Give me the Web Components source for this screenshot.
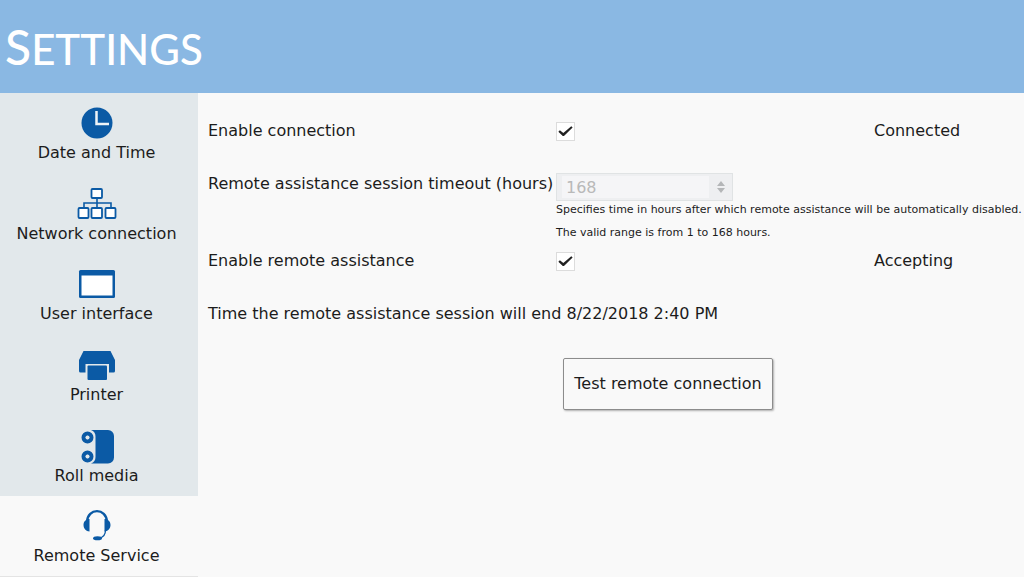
<!DOCTYPE html>
<html lang="en">
<head>
<meta charset="utf-8">
<meta name="viewport" content="width=device-width, initial-scale=1">
<title>Settings</title>
<style>
  html, body { margin: 0; }
  body {
    font: 16px/20px "DejaVu Sans", Verdana, sans-serif;
    color: #1c1c1c;
    background: #f9f9f9;
    --accent: #0b5aa5;
    --bar: #8ab8e3;
    --side: #e2e8eb;
    --page: #f9f9f9;
  }
</style>
</head>
<body>
<settings-page>
  <span slot="title">SETTINGS</span>
  <nav-item slot="nav" icon="clock">Date and Time</nav-item>
  <nav-item slot="nav" icon="network">Network connection</nav-item>
  <nav-item slot="nav" icon="window">User interface</nav-item>
  <nav-item slot="nav" icon="printer">Printer</nav-item>
  <nav-item slot="nav" icon="roll">Roll media</nav-item>
  <nav-item slot="nav" icon="headset" current>Remote Service</nav-item>

  <check-row label="Enable connection" status="Connected"></check-row>
  <timeout-row label="Remote assistance session timeout (hours)" value="168" min="1" max="168">
    <span slot="hint">Specifies time in hours after which remote assistance will be automatically disabled.</span>
    <span slot="range">The valid range is from 1 to 168 hours.</span>
  </timeout-row>
  <check-row label="Enable remote assistance" status="Accepting"></check-row>
  <info-row>Time the remote assistance session will end 8/22/2018 2:40 PM</info-row>
  <action-row>Test remote connection</action-row>
</settings-page>

<script>
const ROW = `
  :host { display: block; }
  .row { display: grid; grid-template-columns: 348fr 318fr 150fr; align-items: center; }
  label { white-space: nowrap; }
`;

class BaseElement extends HTMLElement {
  constructor() {
    super();
    this.attachShadow({ mode: "open" });
  }
  connectedCallback() {
    this.shadowRoot.innerHTML = this.render();
  }
  attr(name) {
    return this.getAttribute(name) || "";
  }
}

customElements.define("settings-page", class extends BaseElement {
  render() {
    return `
      <style>
        :host { display: flex; flex-direction: column; min-height: 100vh; }
        header { background: var(--bar); color: #fff; padding: 19px 5px 16px; }
        h1 { margin: 0; font: 500 42px/56px Lato, Carlito, sans-serif; }
        h1::first-letter { font-size: 48px; }
        .body { flex: 1; display: flex; }
        nav { flex: 0 0 198px; background: var(--side); display: grid; grid-auto-rows: 1fr; }
        main { flex: 1; min-width: 0; padding: 25px 0 24px 10px; display: flex; flex-direction: column; gap: 8px; }
      </style>
      <header><h1><slot name="title"></slot></h1></header>
      <div class="body">
        <nav aria-label="Settings sections"><slot name="nav"></slot></nav>
        <main><slot></slot></main>
      </div>`;
  }
});

const ICONS = {
  clock: `<circle cx="20" cy="16" r="15.5" fill="#0b5aa5"/><path d="M19.500 4v13H32" fill="none" stroke="#eef3f7" stroke-width="2.500"/>`,
  network: `
    <path d="M20 10v12M7 20v-5h27v5" fill="none" stroke="#0b5aa5" stroke-width="1.600"/>
    <g fill="#fff" stroke="#0b5aa5" stroke-width="1.800">
      <rect x="14.500" y="1" width="10.500" height="9" rx="1"/>
      <rect x="1.500" y="20" width="10" height="10" rx="1"/>
      <rect x="14.500" y="20" width="10.500" height="10" rx="1"/>
      <rect x="28.500" y="20" width="10" height="10" rx="1"/>
    </g>`,
  window: `<rect x="2" y="2" width="36" height="28" rx="1.500" fill="#0b5aa5"/><rect x="4.500" y="7.500" width="31" height="20" fill="#fff"/>`,
  printer: `<path d="M6.500 2h27l4.500 9v11a1.500 1.500 0 0 1-1.500 1.500H32V15H8.500v8.500H3.500A1.500 1.500 0 0 1 2 22V11z" fill="#0b5aa5"/><rect x="10.500" y="16.500" width="19.500" height="14.500" rx="1" fill="#0b5aa5"/>`,
  roll: `
    <path d="M14 0h17a6 6 0 0 1 6 6v21.500a6 6 0 0 1-6 6H14c3-1 4.500-3.500 4.500-6.500V6.500C18.500 3.500 17 1 14 0z" fill="#0b5aa5"/>
    <g fill="none" stroke="#0b5aa5" stroke-width="4"><circle cx="10.500" cy="7.500" r="4"/><circle cx="10.500" cy="26.500" r="4"/></g>
    <g fill="#e2e8eb"><circle cx="10.500" cy="7.500" r="1.800"/><circle cx="10.500" cy="26.500" r="1.800"/></g>`,
  headset: `
    <path d="M10 12C10.500-2.500 29.500-2.500 30 12" fill="none" stroke="#0b5aa5" stroke-width="2.400"/>
    <path d="M12.500 9v12.500c-3.500 0-6-3-6-6.500s2.500-6 6-6zM27.500 9v12.500c3.500 0 6-3 6-6.500s-2.500-6-6-6z" fill="#0b5aa5"/>
    <path d="M28.500 20c0 5-2 7.500-6.500 8" fill="none" stroke="#0b5aa5" stroke-width="1.300"/>
    <ellipse cx="20.500" cy="28.200" rx="4.500" ry="2" fill="#0b5aa5"/>`
};

customElements.define("nav-item", class extends BaseElement {
  render() {
    const current = this.hasAttribute("current");
    return `
      <style>
        :host { display: block; }
        :host([current]) { background: var(--page); border-bottom: 1px solid #e4e4e4; }
        a { display: flex; flex-direction: column; align-items: center; gap: 3px; padding-top: 14px; padding-right: 5px; color: inherit; text-decoration: none; white-space: nowrap; }
        svg { display: block; overflow: visible; }
      </style>
      <a href="#${this.attr("icon")}"${current ? ' aria-current="page"' : ""}>
        <svg width="40" height="33" viewBox="0 0 40 33" aria-hidden="true">${ICONS[this.attr("icon")]}</svg>
        <span><slot></slot></span>
      </a>`;
  }
});

customElements.define("check-row", class extends BaseElement {
  render() {
    return `
      <style>
        ${ROW}
        :host { margin-bottom: 19px; }
        .row { min-height: 26px; }
        input { appearance: none; display: block; box-sizing: border-box; width: 19px; height: 19px; margin: 0; border: 1px solid #dcdcdc; background: #fff; }
        input:checked::before { content: ""; display: block; width: 17px; height: 17px; background: #222;
          clip-path: polygon(8% 55%, 17% 46%, 37% 62%, 84% 22%, 92% 30%, 41% 79%, 34% 79%); }
      </style>
      <div class="row">
        <label for="box">${this.attr("label")}</label>
        <input id="box" type="checkbox" checked>
        <span>${this.attr("status")}</span>
      </div>`;
  }
});

customElements.define("timeout-row", class extends BaseElement {
  render() {
    return `
      <style>
        ${ROW}
        .row { grid-template-columns: 348fr 468fr; align-items: start; }
        label { padding-top: 3px; }
        .field { display: flex; align-items: center; box-sizing: border-box; width: 177px; height: 28px; margin-top: 2px; padding: 2px 7px 2px 5px; border: 1px solid #e0e3e4; background: #eeeff1; }
        input { appearance: textfield; flex: 1; min-width: 0; height: 22px; box-sizing: border-box; margin: 0 8px 0 0; padding: 0 4px; border: 0; background: #f5f5f7; color: #b9b9b9; font: inherit; }
        input::-webkit-inner-spin-button { appearance: none; }
        .hints { grid-column: 2; display: grid; gap: 8px; padding-top: 1px; font-size: 11px; line-height: 15px; white-space: nowrap; }
      </style>
      <div class="row">
        <label for="hours">${this.attr("label")}</label>
        <div class="field">
          <input id="hours" type="number" value="${this.attr("value")}" min="${this.attr("min")}" max="${this.attr("max")}" disabled>
          <svg width="8" height="12" viewBox="0 0 8 12" aria-hidden="true" fill="#b4b6b8"><path d="M4 0l4 5H0zM4 12l4-5H0z"/></svg>
        </div>
        <div class="hints"><slot name="hint"></slot><slot name="range"></slot></div>
      </div>`;
  }
});

customElements.define("info-row", class extends BaseElement {
  render() {
    return `
      <style>:host { display: block; margin-bottom: 19px; line-height: 26px; white-space: nowrap; }</style>
      <slot></slot>`;
  }
});

customElements.define("action-row", class extends BaseElement {
  render() {
    return `
      <style>
        ${ROW}
        button { grid-column: 2; justify-self: start; margin: 4px 0 0 7px; width: 210px; height: 52px; padding: 0; border: 1px solid #8c8c8c; border-radius: 2px; background: #f9f9f9; box-shadow: 1px 1px 2px #b0b0b0; color: inherit; font: inherit; white-space: nowrap; }
      </style>
      <div class="row"><button type="button"><slot></slot></button></div>`;
  }
});
</script>
</body>
</html>
